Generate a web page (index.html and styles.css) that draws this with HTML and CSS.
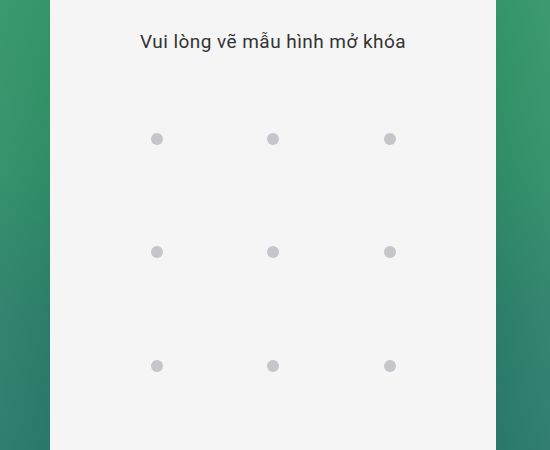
FILE: index.html
```html
<!DOCTYPE html>
<html lang="vi">
<head>
<meta charset="utf-8">
<link rel="stylesheet" href="styles.css">
</head>
<body>
<div class="screen">
  <div class="side side-left"></div>
  <main class="panel">
    <h1 class="title">Vui lòng vẽ mẫu hình mở khóa</h1>
    <div class="pattern">
      <span class="dot"></span><span class="dot"></span><span class="dot"></span>
      <span class="dot"></span><span class="dot"></span><span class="dot"></span>
      <span class="dot"></span><span class="dot"></span><span class="dot"></span>
    </div>
  </main>
  <div class="side side-right"></div>
</div>
</body>
</html>
```
FILE: styles.css
```css
html, body {
  margin: 0;
  padding: 0;
  width: 550px;
  height: 450px;
  overflow: hidden;
}
.screen {
  display: flex;
  width: 550px;
  height: 450px;
  background: linear-gradient(180deg, #36976a 0%, #319068 35%, #2c806b 70%, #2a7a6c 100%);
}
.side {
  height: 100%;
}
.side-left {
  width: 50px;
  background: linear-gradient(90deg, rgba(255,255,255,0.03), rgba(0,0,0,0.02));
}
.side-right {
  width: 54px;
  background: linear-gradient(90deg, rgba(0,0,0,0.02), rgba(255,255,255,0.04));
}
.panel {
  width: 446px;
  height: 100%;
  background: #f5f5f5;
  display: flex;
  flex-direction: column;
  align-items: center;
}
.title {
  margin: 30px 0 0;
  font-family: Roboto, "Noto Sans", sans-serif;
  font-weight: 400;
  font-size: 19px;
  letter-spacing: 0.45px;
  line-height: 24px;
  color: #333333;
}
.pattern {
  margin-top: 28px;
  display: grid;
  grid-template-columns: repeat(3, 116.5px);
  grid-template-rows: repeat(3, 113.5px);
  justify-items: center;
  align-items: center;
}
.dot {
  width: 12px;
  height: 12px;
  border-radius: 50%;
  background: #c4c6cb;
}
```
